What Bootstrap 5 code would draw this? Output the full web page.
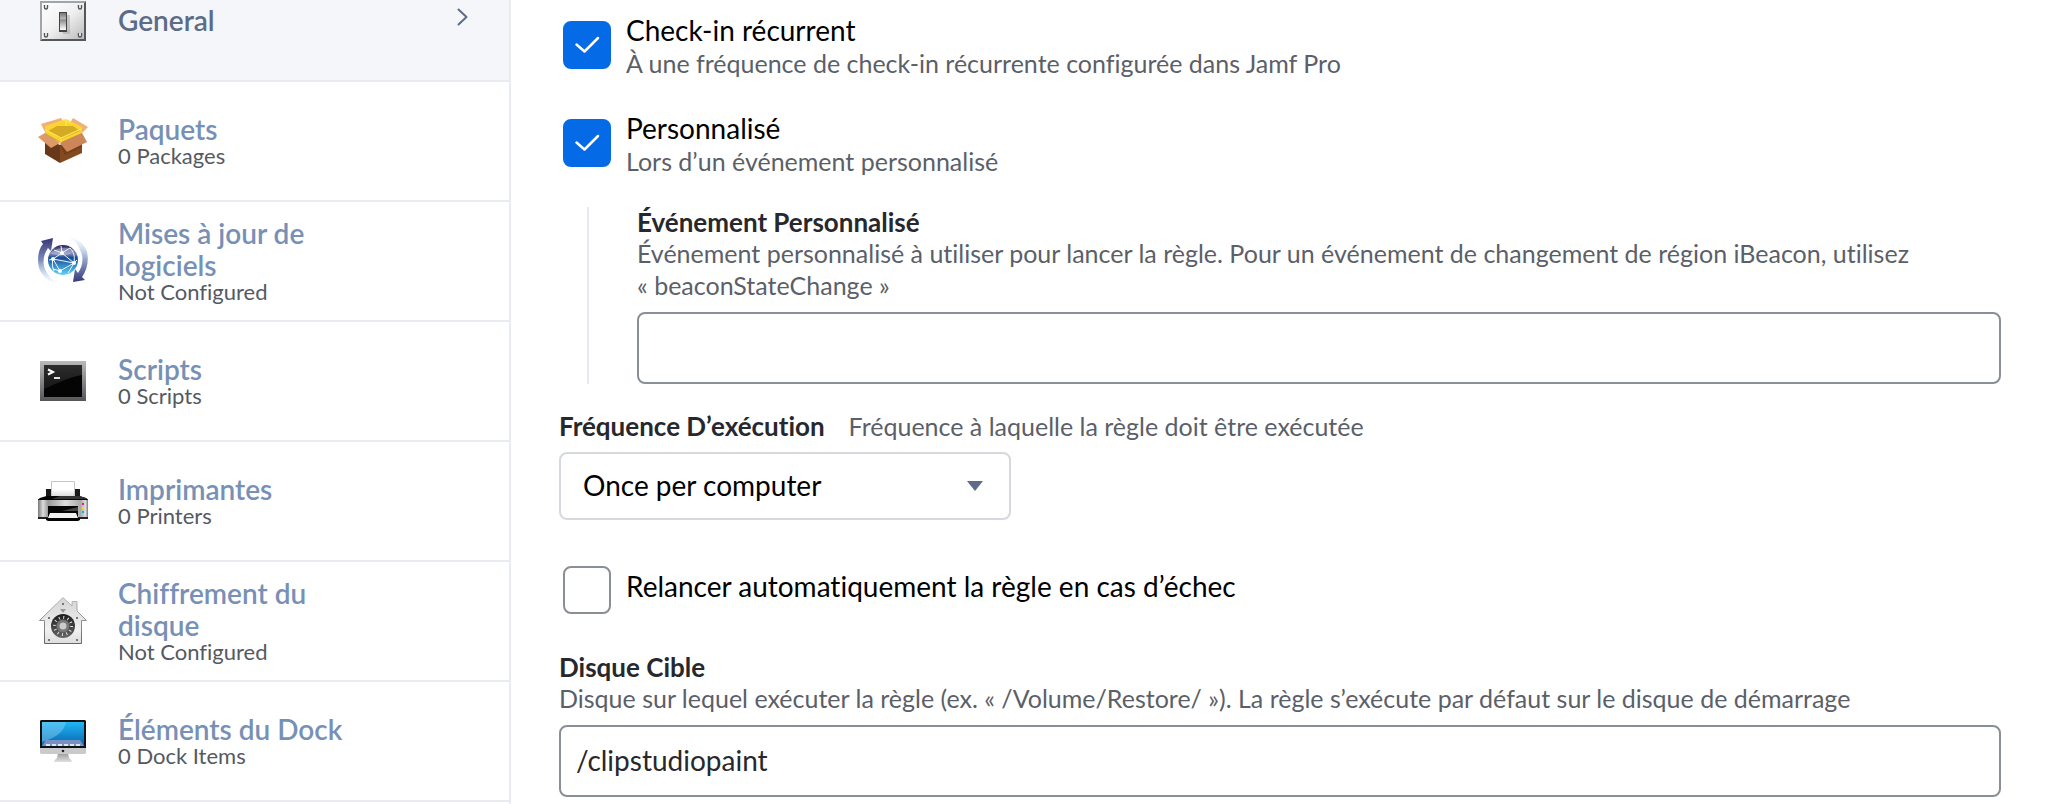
<!DOCTYPE html>
<html lang="fr">
<head>
<meta charset="utf-8">
<meta name="viewport" content="width=device-width, initial-scale=1">
<title>Règle – General</title>
<link rel="stylesheet" href="https://cdn.jsdelivr.net/npm/bootstrap@5.3.0/dist/css/bootstrap.min.css">
<style>
  body { font-family: Lato, "Liberation Sans", sans-serif; font-variant-ligatures: none; color: #000; background: #fff; }
  .payloads { flex: 0 0 511px; border-right: 2px solid #e8ebf0; }
  .payload { height: 120px; padding: 0 40px 0 38px; border-bottom: 2px solid #e8ebf0; color: #7790b6; }
  .payload.current { height: 82px; padding-bottom: 38px; background: #f4f6fa; color: #5c6b88; }
  .payload svg { flex: none; }
  .payload-text { width: 240px; margin-left: 30px; padding-bottom: 2px; }
  .payload-name { display: block; font-size: 28px; line-height: 32px; font-weight: 600; }
  .payload-state { display: block; font-size: 22px; line-height: 22px; color: #555962; }
  .policy { padding: 13px 45px 7px 48px; min-width: 0; }
  .option { gap: 15px; padding-left: 4px; }
  .option .form-check-input { width: 48px; height: 48px; margin: 0; border: 2px solid #8a8e97; border-radius: 8px; flex: none; }
  .option .form-check-input:checked { border-color: #056ae6; background-color: #056ae6; background-size: 48px 48px;
    background-image: url("data:image/svg+xml,%3csvg xmlns='http://www.w3.org/2000/svg' viewBox='0 0 48 48'%3e%3cpath d='M13.5 23.5l8 7L35 17' fill='none' stroke='%23fff' stroke-width='2.5' stroke-linecap='round' stroke-linejoin='round'/%3e%3c/svg%3e"); }
  .option-trigger { margin-bottom: 32px; }
  .option-trigger .form-check-input { margin-top: 8px; }
  .option-name { display: block; font-size: 28px; line-height: 34px; }
  .hint { display: block; font-size: 25px; line-height: 32px; color: #5b5f69; }
  .field-name { display: block; font-size: 26px; line-height: 30px; font-weight: 700; color: #27282d; }
  .nested { margin: -2px 0 27px 28px; padding-left: 48px; border-left: 2px solid #e8e9ee; }
  .policy .form-control { height: 72px; margin-top: 11px; padding: 0 15px 2px; border: 2px solid #8a8e97; border-radius: 8px; font-size: 28px; color: #27282d; }
  .policy .form-select { width: 452px; height: 68px; margin-top: 11px; padding: 0 72px 2px 22px; border: 2px solid #d5d9de; border-radius: 8px; font-size: 28px; color: #000;
    background-position: right 26px center; background-size: 16px 10px;
    background-image: url("data:image/svg+xml,%3csvg xmlns='http://www.w3.org/2000/svg' viewBox='0 0 16 10'%3e%3cpath d='M0 0h16L8 10z' fill='%235c6b88'/%3e%3c/svg%3e"); }
  .retry { margin: 46px 0 38px; }
</style>
</head>
<body>
<div class="d-flex min-vh-100">
  <nav class="payloads" aria-label="Options">
    <a href="#general" class="payload current d-flex align-items-center text-decoration-none" aria-current="page">
      <svg width="50" height="40" viewBox="0 0 50 40" aria-hidden="true">
        <defs>
          <linearGradient id="plate" x1="0" y1="0" x2="1" y2="1"><stop offset="0" stop-color="#fff"/><stop offset=".5" stop-color="#f0f0f0"/><stop offset="1" stop-color="#bbb"/></linearGradient>
          <linearGradient id="lever" x2="0" y2="1"><stop offset="0" stop-color="#777"/><stop offset=".35" stop-color="#bbb"/><stop offset=".4" stop-color="#8a8a8a"/><stop offset="1" stop-color="#fff"/></linearGradient>
        </defs>
        <path d="M2 0h46l-2 2H4v36l-2 2z" fill="#a2a5a8"/><path d="M48 0v40H2l2-2h42V2z" fill="#55585b"/>
        <path d="M4 2h42v36H4z" fill="url(#plate)"/>
        <path d="M23 14h9v19h-7z" fill="#999" opacity=".45"/>
        <path d="M21 11h8v20h-8z" fill="#444"/><path d="M22 12h6v17h-6z" fill="url(#lever)"/>
        <g fill="#fff" stroke="#555" stroke-width="1.4"><path d="M6.500 4v2.500a1.500 1.500 0 0 0 3 0V4M40.500 4v2.500a1.500 1.500 0 0 0 3 0V4M6.500 32v2.500a1.500 1.500 0 0 0 3 0V32M40.500 32v2.500a1.500 1.500 0 0 0 3 0V32"/></g>
      </svg>
      <span class="payload-text"><span class="payload-name">General</span></span>
      <svg class="ms-auto mb-2" width="12" height="18" viewBox="0 0 12 18" aria-hidden="true"><path d="M1.500 1.500 9.500 9l-8 7.500" fill="none" stroke="#5c6b88" stroke-width="2" stroke-linecap="round" stroke-linejoin="round"/></svg>
    </a>
    <a href="#packages" class="payload d-flex align-items-center text-decoration-none">
      <svg width="50" height="50" viewBox="0 0 50 50" aria-hidden="true">
        <path d="M7 22 22 29v18L7 38z" fill="#67391a"/><path d="M22 29 44 20v17L22 47z" fill="#85491f"/>
        <path d="M3 8 23 2l3 5L7 16zM32 7l3-5 15 9-6 6z" fill="#eeb076"/>
        <path d="M7 16 26 5l18 8v6L23 27 7 19z" fill="#d2a726"/>
        <path d="M7 10 28 3l16 8v6L23 26 7 17z" fill="#ffd92e" opacity=".88"/>
        <path d="m10 15 9-5h16l7 5-19 8z" fill="#d4aa25"/>
        <path d="M28 4v6M8 14l15 8 20-9M23 22v5" fill="none" stroke="#ffe650" stroke-width="1.200"/>
        <path d="m7 17 15 10-9 5L0 21z" fill="#dc9a6b"/><path d="m22 27 22-10 5 9-20 10z" fill="#cc865a"/>
        <path d="m22 28 7 8 15-7v2L27 39l-5-9z" fill="#542b10" opacity=".35"/>
      </svg>
      <span class="payload-text"><span class="payload-name">Paquets</span><span class="payload-state">0 Packages</span></span>
    </a>
    <a href="#software-updates" class="payload d-flex align-items-center text-decoration-none">
      <svg width="50" height="50" viewBox="0 0 50 50" aria-hidden="true">
        <defs>
          <linearGradient id="arcL" x2="0" y2="1"><stop offset="0" stop-color="#353777"/><stop offset=".5" stop-color="#7d8dbd"/><stop offset="1" stop-color="#c9eef9" stop-opacity=".2"/></linearGradient>
          <linearGradient id="arcR" x2="0" y2="1"><stop offset="0" stop-color="#d3f1fa" stop-opacity=".2"/><stop offset=".5" stop-color="#91a3ca"/><stop offset="1" stop-color="#343779"/></linearGradient>
          <linearGradient id="globe" x2="0" y2="1"><stop offset="0" stop-color="#27265f"/><stop offset=".3" stop-color="#8189ba"/><stop offset=".42" stop-color="#174b97"/><stop offset="1" stop-color="#60d4fb"/></linearGradient>
        </defs>
        <path d="M15 2 13 15 10 12C5 19 4 28 8 35c2 5 6 9 11 12C10 46 4 40 1 32-1 23 0 14 5 8L3 5z" fill="url(#arcL)"/>
        <path d="M35 46 37 33l3 4c5-7 6-16 2-23C40 8 36 4 30 1c9 1 16 6 19 15 2 9 0 18-5 25l3 3z" fill="url(#arcR)"/>
        <circle cx="25" cy="24" r="15" fill="url(#globe)"/>
        <path d="M12 17c8-6 18-7 25-2-6 5-17 6-25 2z" fill="#fff" opacity=".3"/>
        <g fill="none" stroke="#e8f8ff" stroke-width="1"><path d="m24 17-9 6 7 12 14-8-12-10 8-5M15 23l21 4M24 17l-8-3M24 17l-1-7M15 23l-4 1M22 35l-7-2M36 27l3-3M36 27l-6 10M32 12c4 4 5 9 4 15M15 23c-1 4-1 8 1 12"/></g>
        <g fill="#fff"><circle cx="24" cy="17" r="2"/><circle cx="15" cy="23" r="2"/><circle cx="22" cy="35" r="2"/><circle cx="36" cy="27" r="2"/></g>
      </svg>
      <span class="payload-text"><span class="payload-name">Mises à jour de logiciels</span><span class="payload-state">Not Configured</span></span>
    </a>
    <a href="#scripts" class="payload d-flex align-items-center text-decoration-none">
      <svg width="50" height="40" viewBox="0 0 50 40" aria-hidden="true">
        <defs><linearGradient id="bezel" x2="0" y2="1"><stop offset="0" stop-color="#b9babc"/><stop offset="1" stop-color="#555459"/></linearGradient>
        <linearGradient id="gloss" x2="0" y2="1"><stop offset="0" stop-color="#2c2c2c"/><stop offset="1" stop-color="#171717"/></linearGradient></defs>
        <path d="M2 0h46v40H2z" fill="url(#bezel)"/><path d="M6 4h38v32H6z" fill="#040404"/>
        <path d="M6 4h38v10C31 16 20 22 6 28z" fill="url(#gloss)"/>
        <path d="m10 8.500 5 2.500-5 2.500" fill="none" stroke="#fff" stroke-width="2"/><path d="M16 16h6v2h-6z" fill="#e2e2e2"/>
      </svg>
      <span class="payload-text"><span class="payload-name">Scripts</span><span class="payload-state">0 Scripts</span></span>
    </a>
    <a href="#printers" class="payload d-flex align-items-center text-decoration-none">
      <svg width="50" height="40" viewBox="0 0 50 40" aria-hidden="true">
        <defs><linearGradient id="shell" x2="1" y2="0"><stop offset="0" stop-color="#777"/><stop offset=".1" stop-color="#ddd"/><stop offset=".2" stop-color="#999"/><stop offset=".55" stop-color="#ddd"/><stop offset=".85" stop-color="#aaa"/><stop offset=".95" stop-color="#ddd"/><stop offset="1" stop-color="#777"/></linearGradient>
        <linearGradient id="paper" x2="0" y2="1"><stop offset=".5" stop-color="#fff"/><stop offset="1" stop-color="#d5d5d5"/></linearGradient></defs>
        <path d="M8 8h5v3h24V8h5v10H8z" fill="#181818"/>
        <path d="M13.500.500h23V16h-23z" fill="url(#paper)" stroke="#c5c5c5"/>
        <path d="M0 18h50v20H0z" fill="url(#shell)"/>
        <path d="M0 19c0-2 8-4 10-4h30c2 0 10 2 10 4z" fill="#050505"/><path d="M22 15h18c2 0 8 2 9 3H14z" fill="#333"/>
        <path d="M0 36h50v2H0z" fill="#222"/>
        <path d="M10 25h30v12H10z" fill="#050505"/><path d="M24 30 40 26v4z" fill="#444"/>
        <path d="M12 32h26l2 5H10z" fill="#f1f1f1"/><path d="M8 37h34v2l-2 1H10l-2-1z" fill="#050505"/>
        <path d="M44 22h2v2h-2z" fill="#e91882"/><path d="M44 26h2v2h-2z" fill="#f8e70b"/><path d="M44 30h2v2h-2z" fill="#18aee8"/>
      </svg>
      <span class="payload-text"><span class="payload-name">Imprimantes</span><span class="payload-state">0 Printers</span></span>
    </a>
    <a href="#encryption" class="payload d-flex align-items-center text-decoration-none">
      <svg width="50" height="50" viewBox="0 0 50 50" aria-hidden="true">
        <defs><linearGradient id="house" x2="0" y2="1"><stop offset="0" stop-color="#d4d4d4"/><stop offset=".7" stop-color="#f1f1f1"/><stop offset="1" stop-color="#ddd"/></linearGradient>
        <linearGradient id="wall" x2="0" y2="1"><stop offset="0" stop-color="#bbb"/><stop offset="1" stop-color="#666"/></linearGradient>
        <linearGradient id="dial" x2="0" y2="1"><stop offset="0" stop-color="#1c1c1c"/><stop offset="1" stop-color="#666"/></linearGradient></defs>
        <path d="M25 1.500 34 10V5.500h5V15l9.500 9.500h-5v23h-37v-23h-5z" fill="url(#house)" stroke="url(#wall)"/>
        <g fill="#777"><path d="M24 7h2v2h-2zM10 21h2v2h-2zM38 21h2v2h-2zM10 43h2v2h-2zM38 43h2v2h-2z"/></g>
        <path d="M22 13h6l-3 4z" fill="#999"/>
        <circle cx="25" cy="30" r="12" fill="url(#dial)"/>
        <circle cx="25" cy="30" r="8.500" fill="none" stroke="#ddd" stroke-width="3" stroke-dasharray="1 3.450"/>
        <circle cx="25" cy="30" r="6.500" fill="#777"/><circle cx="25" cy="30" r="3.500" fill="#ccc"/>
      </svg>
      <span class="payload-text"><span class="payload-name">Chiffrement du disque</span><span class="payload-state">Not Configured</span></span>
    </a>
    <a href="#dock-items" class="payload d-flex align-items-center text-decoration-none">
      <svg width="50" height="42" viewBox="0 0 50 42" aria-hidden="true">
        <defs><linearGradient id="desk" x2="0" y2="1"><stop offset="0" stop-color="#1fb7f5"/><stop offset="1" stop-color="#0a62ad"/></linearGradient>
        <linearGradient id="foot" x2="0" y2="1"><stop offset="0" stop-color="#999"/><stop offset="1" stop-color="#e0e0e0"/></linearGradient></defs>
        <path d="M20 33h10l1 5c1 1 3 2 3 4H16c0-2 2-3 3-4z" fill="url(#foot)"/>
        <path d="M3 0h44l1 1v32l-1 1H3l-1-1V1z" fill="#c9cacc"/><path d="M3 0h44l1 1v27H2V1z" fill="#111"/>
        <path d="M4 2h42v24H4z" fill="url(#desk)"/><path d="M4 2h24c-2 9-8 15-24 20z" fill="#8bd3f7" opacity=".45"/>
        <path d="M8 20h34l4 6H4z" fill="#7890c4"/><path d="M8 25h36" stroke="#d8e7fc" stroke-width="2" stroke-dasharray="4 2"/>
        <circle cx="25" cy="31" r="1.300" fill="#222"/>
      </svg>
      <span class="payload-text"><span class="payload-name">Éléments du Dock</span><span class="payload-state">0 Dock Items</span></span>
    </a>
  </nav>

  <main class="policy flex-grow-1">
    <form>
      <div class="option option-trigger d-flex align-items-start">
        <input class="form-check-input" type="checkbox" id="checkin" checked aria-describedby="checkin-hint">
        <div>
          <label class="option-name" for="checkin">Check-in récurrent</label>
          <span class="hint" id="checkin-hint">À une fréquence de check-in récurrente configurée dans Jamf Pro</span>
        </div>
      </div>
      <div class="option option-trigger d-flex align-items-start">
        <input class="form-check-input" type="checkbox" id="custom" checked aria-describedby="custom-hint">
        <div>
          <label class="option-name" for="custom">Personnalisé</label>
          <span class="hint" id="custom-hint">Lors d’un événement personnalisé</span>
        </div>
      </div>
      <div class="nested">
        <label class="field-name" for="event">Événement Personnalisé</label>
        <span class="hint" id="event-hint">Événement personnalisé à utiliser pour lancer la règle. Pour un événement de changement de région iBeacon, utilisez «&nbsp;beaconStateChange&nbsp;»</span>
        <input class="form-control" type="text" id="event" aria-describedby="event-hint">
      </div>
      <div class="d-flex align-items-center gap-4">
        <label class="field-name" for="frequency">Fréquence D’exécution</label>
        <span class="hint lh-1" id="frequency-hint">Fréquence à laquelle la règle doit être exécutée</span>
      </div>
      <select class="form-select" id="frequency" aria-describedby="frequency-hint">
        <option>Once per computer</option>
      </select>
      <div class="option retry d-flex align-items-center">
        <input class="form-check-input" type="checkbox" id="retry">
        <label class="option-name pb-2" for="retry">Relancer automatiquement la règle en cas d’échec</label>
      </div>
      <label class="field-name" for="drive">Disque Cible</label>
      <span class="hint" id="drive-hint">Disque sur lequel exécuter la règle (ex. «&nbsp;/Volume/Restore/&nbsp;»). La règle s’exécute par défaut sur le disque de démarrage</span>
      <input class="form-control" type="text" id="drive" value="/clipstudiopaint" aria-describedby="drive-hint">
    </form>
  </main>
</div>
<script src="https://cdn.jsdelivr.net/npm/bootstrap@5.3.0/dist/js/bootstrap.bundle.min.js"></script>
</body>
</html>
